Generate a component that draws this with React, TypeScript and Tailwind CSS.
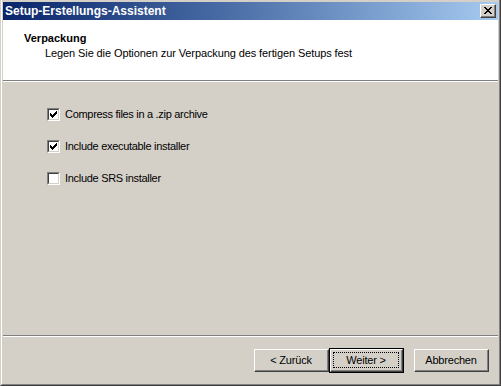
import { useState } from 'react';

const FONT = { fontFamily: '"Liberation Sans", Arial, sans-serif' };

function Check({ checked, label, onToggle }: { checked: boolean; label: string; onToggle: () => void }) {
  return (
    <button onClick={onToggle} className="flex items-center gap-[5px] text-left">
      <span className="flex h-[13px] w-[13px] items-center justify-center border-t border-l border-t-[#808080] border-l-[#808080] border-r border-b border-r-white border-b-white">
        <span className="flex h-[11px] w-[11px] items-center justify-center border-t border-l border-t-[#404040] border-l-[#404040] border-r border-b border-r-[#d4d0c8] border-b-[#d4d0c8] bg-white">
          {checked && (
            <svg width="7" height="7" viewBox="0 0 7 7">
              <path d="M0 2h1v1h1v1h1V3h1V2h1V1h1V0h1v3H6v1H5v1H4v1H3v1H2V6H1V5H0z" fill="#000" />
            </svg>
          )}
        </span>
      </span>
      <span className="text-[11px] leading-[13px] tracking-[-0.3px] text-black">{label}</span>
    </button>
  );
}

function Btn({ children, primary }: { children: React.ReactNode; primary?: boolean }) {
  if (primary) {
    return (
      <div className="h-[25px] w-[75px] border border-black">
        <div className="h-full w-full border-t border-l border-t-white border-l-white border-r border-b border-r-[#404040] border-b-[#404040]">
          <div className="flex h-full w-full items-center justify-center border-r border-b border-r-[#808080] border-b-[#808080] bg-[#d4d0c8] p-[2px]">
            <div className="flex h-full w-full items-center justify-center border border-dotted border-black text-[11px] tracking-[-0.2px] text-black">{children}</div>
          </div>
        </div>
      </div>
    );
  }
  return (
    <div className="h-[23px] w-[75px] border-t border-l border-t-white border-l-white border-r border-b border-r-[#404040] border-b-[#404040]">
      <div className="flex h-full w-full items-center justify-center border-r border-b border-r-[#808080] border-b-[#808080] bg-[#d4d0c8] text-[11px] tracking-[-0.2px] text-black">{children}</div>
    </div>
  );
}

export default function App() {
  const [opts, setOpts] = useState([true, true, false]);
  const labels = ['Compress files in a .zip archive', 'Include executable installer', 'Include SRS installer'];
  const toggle = (i: number) => setOpts(o => o.map((v, j) => (j === i ? !v : v)));

  return (
    <div style={FONT} className="h-[386px] w-[501px] overflow-hidden border-l border-l-[#d4d0c8] border-r border-b border-r-[#404040] border-b-[#404040] bg-[#d4d0c8]">
      <div className="flex h-full flex-col border-l border-l-white border-r border-b border-r-[#808080] border-b-[#808080] px-px pt-[2px] pb-px">
        {/* title bar */}
        <div className="flex h-[18px] shrink-0 items-center justify-between bg-gradient-to-r from-[#0a246a] to-[#a6caf0] pl-[2px] pr-[2px]">
          <span className="text-[12px] font-bold text-white">Setup-Erstellungs-Assistent</span>
          <div className="h-[14px] w-[16px] border-t border-l border-t-white border-l-white border-r border-b border-r-[#404040] border-b-[#404040]">
            <div className="flex h-full w-full items-center justify-center border-r border-b border-r-[#808080] border-b-[#808080] bg-[#d4d0c8]">
              <svg width="8" height="7" viewBox="0 0 8 7">
                <path d="M0 0h2v1h1v1h2V1h1V0h2v1H7v1H6v1H5v1h1v1h1v1h1v1H6V6H5V5H3v1H2v1H0V6h1V5h1V4h1V3H2V2H1V1H0z" fill="#000" />
              </svg>
            </div>
          </div>
        </div>

        {/* header */}
        <div className="flex h-[60px] shrink-0 flex-col bg-white pl-[21px] pt-[11px]">
          <span className="text-[11px] font-bold leading-[14px] text-black">Verpackung</span>
          <span className="pl-[21px] pt-[1px] text-[11px] leading-[14px] tracking-[-0.1px] text-black">Legen Sie die Optionen zur Verpackung des fertigen Setups fest</span>
        </div>
        <div className="h-px shrink-0 bg-[#808080]" />
        <div className="h-px shrink-0 bg-white" />

        {/* options */}
        <div className="flex flex-1 flex-col gap-[19px] pl-[44px] pt-[26px]">
          {labels.map((l, i) => (
            <Check key={l} label={l} checked={opts[i]} onToggle={() => toggle(i)} />
          ))}
        </div>

        <div className="h-px shrink-0 bg-[#808080]" />
        <div className="h-px shrink-0 bg-white" />

        {/* buttons */}
        <div className="flex h-[46px] shrink-0 items-start pl-[251px] pt-[11px]">
          <div className="pt-px"><Btn>&lt; Zurück</Btn></div>
          <Btn primary>Weiter &gt;</Btn>
          <div className="pl-[10px] pt-px"><Btn>Abbrechen</Btn></div>
        </div>
      </div>
    </div>
  );
}
